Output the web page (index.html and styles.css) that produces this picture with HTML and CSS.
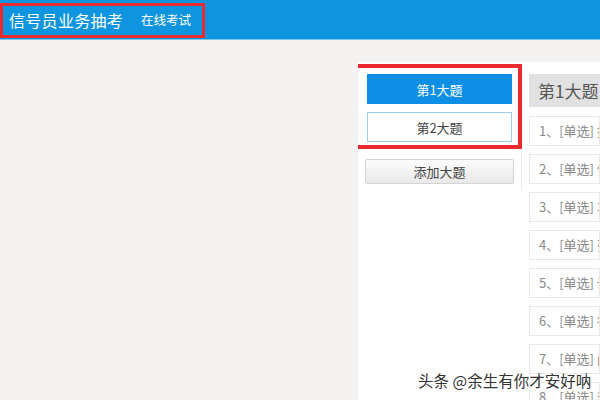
FILE: index.html
```html
<!DOCTYPE html>
<html lang="zh">
<head>
<meta charset="utf-8">
<link rel="stylesheet" href="styles.css">
</head>
<body>
<header class="topbar">
  <span class="title">信号员业务抽考</span>
  <span class="subtitle">在线考试</span>
  <div class="mark mark-top"></div>
</header>
<main class="main">
  <div class="spacer"></div>
  <section class="panel">
    <div class="left">
      <div class="tabs">
        <button class="btn btn-active">第1大题</button>
        <button class="btn btn-outline">第2大题</button>
        <div class="mark mark-tabs"></div>
      </div>
      <button class="btn btn-add">添加大题</button>
    </div>
    <div class="right">
      <div class="sec-head">第1大题 单选题</div>
      <div class="item">1、[单选] 接发列车工作</div>
      <div class="item">2、[单选] 信号员在接班</div>
      <div class="item">3、[单选] 车站值班员</div>
      <div class="item">4、[单选] 列车进路</div>
      <div class="item">5、[单选] 调车作业</div>
      <div class="item">6、[单选] 行车凭证</div>
      <div class="item">7、[单选] 闭塞方式</div>
      <div class="item">8、[单选] 道岔</div>
    </div>
  </section>
</main>
<div class="watermark">头条 @余生有你才安好呐</div>
</body>
</html>
```
FILE: styles.css
```css
html, body {
  margin: 0;
  padding: 0;
  width: 600px;
  height: 400px;
  overflow: hidden;
  background: #f3f2f0;
  font-family: "Microsoft YaHei", "Noto Sans CJK SC", "Liberation Sans", sans-serif;
}
.topbar {
  position: relative;
  height: 40px;
  background: #0f95e0;
  display: flex;
  align-items: center;
  padding-left: 9px;
  box-sizing: border-box;
  border-bottom: 1px solid #7cc5ef;
}
.title {
  color: #fff;
  font-size: 16px;
  letter-spacing: 0.3px;
}
.subtitle {
  color: #fff;
  font-size: 12.5px;
  margin-left: 18px;
}
.mark {
  position: absolute;
  border: 3px solid #ea2a2e;
  box-sizing: border-box;
  pointer-events: none;
}
.mark-top {
  left: 0;
  top: 3px;
  width: 205px;
  height: 35px;
}
.main {
  display: flex;
  height: 360px;
}
.spacer {
  width: 358px;
  flex: none;
}
.panel {
  flex: 1;
  background: #fff;
  margin-top: 22px;
  display: flex;
  align-items: flex-start;
  padding-top: 12px;
  overflow: hidden;
}
.left {
  width: 164px;
  flex: none;
  height: 116px;
  border-right: 1px solid #ececec;
  box-sizing: border-box;
}
.tabs {
  position: relative;
  display: flex;
  flex-direction: column;
  gap: 8px;
  padding-left: 9px;
}
.btn {
  display: block;
  font-family: inherit;
  font-size: 13px;
  color: #444;
  box-sizing: border-box;
  padding: 0;
  cursor: pointer;
}
.btn-active {
  width: 145px;
  height: 30px;
  background: #0d8fe6;
  border: 1px solid #0d8fe6;
  color: #fff;
}
.btn-outline {
  width: 145px;
  height: 30px;
  background: #fff;
  border: 1px solid #9dcdf2;
}
.mark-tabs {
  left: -8px;
  top: -10px;
  width: 172px;
  height: 85px;
  border-width: 4px;
}
.btn-add {
  margin: 17px 0 0 7px;
  width: 149px;
  height: 25px;
  background: linear-gradient(#fbfbfb, #e9e9e9);
  border: 1px solid #d4d4d4;
  border-radius: 2px;
}
.right {
  margin-left: 7px;
  flex: 1;
  display: flex;
  flex-direction: column;
  gap: 8px;
  min-width: 0;
}
.sec-head {
  flex: none;
  height: 33px;
  margin-bottom: 1px;
  background: #e1e1e1;
  color: #555;
  font-size: 17px;
  line-height: 33px;
  padding-left: 9px;
  white-space: nowrap;
  overflow: hidden;
}
.item {
  height: 30px;
  flex: none;
  box-sizing: border-box;
  border: 1px solid #e8e8e8;
  color: #888;
  font-size: 13px;
  line-height: 28px;
  padding-left: 9px;
  white-space: nowrap;
  overflow: hidden;
}
.watermark {
  position: absolute;
  left: 418px;
  top: 369px;
  font-size: 15.5px;
  color: #333;
  white-space: nowrap;
  text-shadow: 0 0 2px #fff, 0 0 2px #fff, 0 0 1px #fff;
}
```
